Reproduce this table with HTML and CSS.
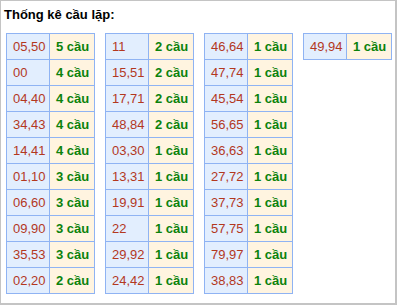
FILE: index.html
```html
<!DOCTYPE html>
<html lang="vi">
<head>
<meta charset="utf-8">
<title>Thống kê cầu lặp</title>
<link rel="stylesheet" href="styles.css">
</head>
<body>
<div class="page">
  <div class="title">Thống kê cầu lặp:</div>
  <div class="tables">
    <table class="tk">
      <tr><td class="n">05,50</td><td class="c">5 cầu</td></tr>
      <tr><td class="n">00</td><td class="c">4 cầu</td></tr>
      <tr><td class="n">04,40</td><td class="c">4 cầu</td></tr>
      <tr><td class="n">34,43</td><td class="c">4 cầu</td></tr>
      <tr><td class="n">14,41</td><td class="c">4 cầu</td></tr>
      <tr><td class="n">01,10</td><td class="c">3 cầu</td></tr>
      <tr><td class="n">06,60</td><td class="c">3 cầu</td></tr>
      <tr><td class="n">09,90</td><td class="c">3 cầu</td></tr>
      <tr><td class="n">35,53</td><td class="c">3 cầu</td></tr>
      <tr><td class="n">02,20</td><td class="c">2 cầu</td></tr>
    </table>
    <table class="tk">
      <tr><td class="n">11</td><td class="c">2 cầu</td></tr>
      <tr><td class="n">15,51</td><td class="c">2 cầu</td></tr>
      <tr><td class="n">17,71</td><td class="c">2 cầu</td></tr>
      <tr><td class="n">48,84</td><td class="c">2 cầu</td></tr>
      <tr><td class="n">03,30</td><td class="c">1 cầu</td></tr>
      <tr><td class="n">13,31</td><td class="c">1 cầu</td></tr>
      <tr><td class="n">19,91</td><td class="c">1 cầu</td></tr>
      <tr><td class="n">22</td><td class="c">1 cầu</td></tr>
      <tr><td class="n">29,92</td><td class="c">1 cầu</td></tr>
      <tr><td class="n">24,42</td><td class="c">1 cầu</td></tr>
    </table>
    <table class="tk">
      <tr><td class="n">46,64</td><td class="c">1 cầu</td></tr>
      <tr><td class="n">47,74</td><td class="c">1 cầu</td></tr>
      <tr><td class="n">45,54</td><td class="c">1 cầu</td></tr>
      <tr><td class="n">56,65</td><td class="c">1 cầu</td></tr>
      <tr><td class="n">36,63</td><td class="c">1 cầu</td></tr>
      <tr><td class="n">27,72</td><td class="c">1 cầu</td></tr>
      <tr><td class="n">37,73</td><td class="c">1 cầu</td></tr>
      <tr><td class="n">57,75</td><td class="c">1 cầu</td></tr>
      <tr><td class="n">79,97</td><td class="c">1 cầu</td></tr>
      <tr><td class="n">38,83</td><td class="c">1 cầu</td></tr>
    </table>
    <table class="tk">
      <tr><td class="n">49,94</td><td class="c">1 cầu</td></tr>
    </table>
  </div>
</div>
</body>
</html>
```
FILE: styles.css
```css
html, body {
  margin: 0;
  padding: 0;
  background: #ffffff;
}
.page {
  box-sizing: border-box;
  width: 397px;
  height: 305px;
  border-style: solid;
  border-color: #c4c4c4;
  border-width: 1px 2px 2px 1px;
  padding: 6px 0 0 5px;
  font-family: "Liberation Sans", Arial, sans-serif;
}
.title {
  font-size: 13px;
  font-weight: bold;
  line-height: 15px;
  color: #000;
  margin-left: -2px;
}
.tables {
  display: flex;
  align-items: flex-start;
  gap: 10px;
  margin-top: 11px;
}
.tk {
  border-collapse: collapse;
  table-layout: fixed;
  width: 89px;
  font-size: 13px;
}
.tk td {
  border: 1px solid #8fb3f3;
  height: 25px;
  padding: 0 0 0 6px;
  line-height: 15px;
  white-space: nowrap;
}
.tk .n {
  width: 36px;
  background: #e2eefe;
  color: #b3381e;
}
.tk .c {
  background: #fff4e0;
  color: #0c820c;
  font-weight: bold;
}
```
